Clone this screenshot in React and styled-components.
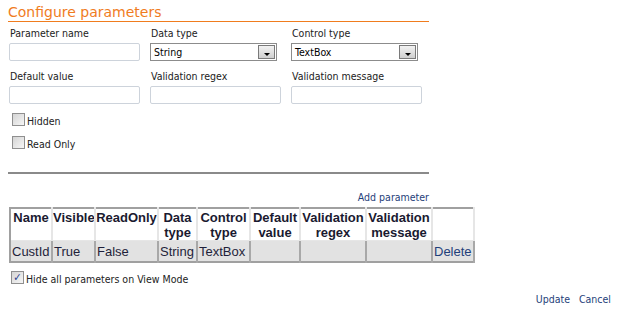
import React from "react";
import styled, { createGlobalStyle } from "styled-components";

const GlobalStyle = createGlobalStyle`
  html, body { margin: 0; padding: 0; background: #fff; }
  body { font-family: "DejaVu Sans Condensed", "DejaVu Sans", sans-serif; }
`;

const Page = styled.div`
  width: 620px;
  height: 317px;
  padding: 4px 8px 0 8px;
  box-sizing: border-box;
  font-family: "DejaVu Sans Condensed", "DejaVu Sans", sans-serif;
  font-size: 10.5px;
  color: #222;
`;

const Panel = styled.div`
  width: 421px;
`;

const Title = styled.h2`
  margin: 0;
  font-family: "DejaVu Sans", sans-serif;
  font-weight: normal;
  font-size: 14px;
  line-height: 16px;
  color: #f07c1e;
  padding-bottom: 1px;
  border-bottom: 1px solid #f07c1e;
`;

const FieldGrid = styled.div`
  display: grid;
  grid-template-columns: 141px 141px 139px;
  row-gap: 9px;
  margin-top: 5px;
  padding-left: 1px;
`;

const Field = styled.div`
  display: flex;
  flex-direction: column;
  gap: 3px;
`;

const Label = styled.label`
  font-size: 10.5px;
  line-height: 13px;
  padding-left: 1px;
  color: #222;
`;

const TextInput = styled.input`
  width: 131px;
  height: 18px;
  box-sizing: border-box;
  border: 1px solid #cdd3db;
  border-radius: 2px;
  margin: 0;
  padding: 0 3px;
  font: inherit;
`;

const Select = styled.div`
  width: 127px;
  height: 18px;
  box-sizing: border-box;
  border: 1px solid #8c8c8c;
  display: flex;
  align-items: center;
  justify-content: space-between;
  padding: 0 1px 0 3px;
  background: #fff;
  font-size: 10.5px;
  color: #000;
`;

const DropButton = styled.span`
  width: 17px;
  height: 14px;
  box-sizing: border-box;
  border: 1px solid #7a7a7a;
  background: linear-gradient(#f2f2f2, #cfcfcf);
  display: flex;
  align-items: center;
  justify-content: center;
  &::after {
    content: "";
    margin-top: 4px;
    border-left: 3px solid transparent;
    border-right: 3px solid transparent;
    border-top: 3px solid #000;
  }
`;

const CheckRow = styled.div`
  display: flex;
  align-items: center;
  gap: 2px;
  margin: ${(p) => p.$top || 0}px 0 0 4px;
  height: 14px;
`;

const Box = styled.span`
  width: 13px;
  height: 13px;
  box-sizing: border-box;
  border: 1px solid #8f8f8f;
  background: linear-gradient(135deg, #d4d4d4, #f6f6f6);
  display: flex;
  align-items: center;
  justify-content: center;
  color: #2a3f8f;
  font-size: 11px;
  line-height: 1;
`;

const CheckText = styled.span`
  font-size: 10.5px;
  color: #222;
  margin-top: 3px;
`;

const Divider = styled.hr`
  margin: 23px 0 0 0;
  border: 0;
  border-top: 2px solid #8a8a8a;
`;

const LinkRow = styled.div`
  display: flex;
  justify-content: flex-end;
  gap: 9px;
  margin-top: ${(p) => p.$top}px;
  width: ${(p) => p.$w}px;
`;

const Link = styled.a`
  color: #1f3f7a;
  font-size: ${(p) => p.$size || 10.5}px;
  text-decoration: none;
  cursor: pointer;
`;

const Table = styled.table`
  margin: 4px 0 0 1px;
  width: 464px;
  table-layout: fixed;
  border-collapse: collapse;
  border: 2px solid #a0a0a0;
  font-family: "Liberation Sans", Arial, sans-serif;
  font-size: 13px;
  color: #1a1a30;
`;

const Th = styled.th`
  border: 1px solid #e6e6e6;
  border-right: 2px solid #e6e6e6;
  padding: 1px 0 0 0;
  font-weight: bold;
  line-height: 15px;
  vertical-align: top;
  text-align: center;
  height: 31px;
  box-sizing: border-box;
  overflow: hidden;
  white-space: normal;
`;

const Td = styled.td`
  background: #e2e2e2;
  border: 1px solid #a8a8a8;
  border-right: 2px solid #a8a8a8;
  padding: 0 1px;
  height: 20px;
  line-height: 15px;
  color: #1f1f3a;
  text-align: left;
  white-space: nowrap;
  overflow: hidden;
`;

const HideRow = styled(CheckRow)`
  margin-left: 3px;
`;

const cols = [
  ["Name", 42],
  ["Visible", 43],
  ["ReadOnly", 63],
  ["Data type", 39],
  ["Control type", 53],
  ["Default value", 50],
  ["Validation regex", 66],
  ["Validation message", 66],
  ["", 42],
];

const row = ["CustId", "True", "False", "String", "TextBox", "", "", ""];

export default function App() {
  return (
    <Page>
      <GlobalStyle />
      <Panel>
        <Title>Configure parameters</Title>
        <FieldGrid>
          <Field>
            <Label>Parameter name</Label>
            <TextInput />
          </Field>
          <Field>
            <Label>Data type</Label>
            <Select>
              String
              <DropButton />
            </Select>
          </Field>
          <Field>
            <Label>Control type</Label>
            <Select>
              TextBox
              <DropButton />
            </Select>
          </Field>
          <Field>
            <Label>Default value</Label>
            <TextInput />
          </Field>
          <Field>
            <Label>Validation regex</Label>
            <TextInput />
          </Field>
          <Field>
            <Label>Validation message</Label>
            <TextInput />
          </Field>
        </FieldGrid>
        <CheckRow $top={8}>
          <Box />
          <CheckText>Hidden</CheckText>
        </CheckRow>
        <CheckRow $top={9}>
          <Box />
          <CheckText>Read Only</CheckText>
        </CheckRow>
        <Divider />
        <LinkRow $top={17} $w={421}>
          <Link>Add parameter</Link>
        </LinkRow>
      </Panel>
      <Table>
        <colgroup>
          {cols.map(([, w], i) => (
            <col key={i} style={{ width: w }} />
          ))}
        </colgroup>
        <thead>
          <tr>
            {cols.map(([t], i) => (
              <Th key={i}>{t}</Th>
            ))}
          </tr>
        </thead>
        <tbody>
          <tr>
            {row.map((c, i) => (
              <Td key={i}>{c}</Td>
            ))}
            <Td>
              <Link as="span" $size={13}>
                Delete
              </Link>
            </Td>
          </tr>
        </tbody>
      </Table>
      <HideRow $top={7}>
        <Box>✓</Box>
        <CheckText>Hide all parameters on View Mode</CheckText>
      </HideRow>
      <LinkRow $top={9} $w={603}>
        <Link>Update</Link>
        <Link>Cancel</Link>
      </LinkRow>
    </Page>
  );
}
